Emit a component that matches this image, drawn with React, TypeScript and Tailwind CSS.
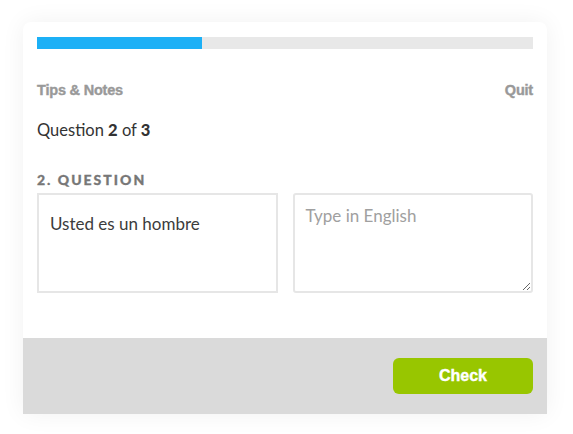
export default function App() {
    return (
        <div className="min-h-screen bg-white pt-[22px] pl-[23px]" style={{ fontFamily: "Lato, 'Liberation Sans', sans-serif" }}>
            <div className="w-[524px] overflow-hidden rounded-t-lg bg-white shadow-[0_0_24px_rgba(0,0,0,0.06)]">
                <div className="px-[14px] pt-[15px] pb-[45px]">
                    {/* progress */}
                    <div className="h-3 w-full bg-[#e8e8e8]">
                        <div className="h-full w-1/3 bg-[#1cb0f6]" />
                    </div>

                    <div className="mt-[31px] flex items-center justify-between text-[14.5px] font-bold leading-5 text-[#999] tracking-[-0.2px] [-webkit-text-stroke:0.4px_#999]" style={{ fontFamily: "'Liberation Sans', Arial, sans-serif" }}>
                        <span>Tips &amp; Notes</span>
                        <span>Quit</span>
                    </div>

                    <p className="mt-[18px] text-[16.5px] leading-6 text-[#333]">
                        Question <b className="font-black">2</b> of <b className="font-black">3</b>
                    </p>

                    <h3 className="mt-[30px] text-[14px] font-black uppercase leading-4 tracking-[2px] text-[#777] [-webkit-text-stroke:0.3px_#777]">
                        2. Question
                    </h3>

                    <div className="mt-[5px] grid grid-cols-2 gap-[15px]">
                        <div className="h-[100px] border-2 border-[#e6e6e6] px-[11px] pt-[17px] text-[17px] leading-6 text-[#3c3c3c]">
                            Usted es un hombre
                        </div>
                        <textarea
                            placeholder="Type in English"
                            className="h-[100px] rounded-[3px] border-2 border-[#e6e6e6] px-[11px] pt-[9px] text-[17px] leading-6 text-[#3c3c3c] outline-none placeholder:text-[#a0a0a0]"
                        />
                    </div>
                </div>

                <div className="flex h-[76px] justify-end bg-[#dadada] px-[14px] pt-[20px]">
                    <button className="h-9 w-[140px] rounded-[6px] bg-[#98c600] text-[16px] font-bold text-white [-webkit-text-stroke:0.4px_white]" style={{ fontFamily: "'Liberation Sans', Arial, sans-serif" }}>
                        Check
                    </button>
                </div>
            </div>
        </div>
    )
}
